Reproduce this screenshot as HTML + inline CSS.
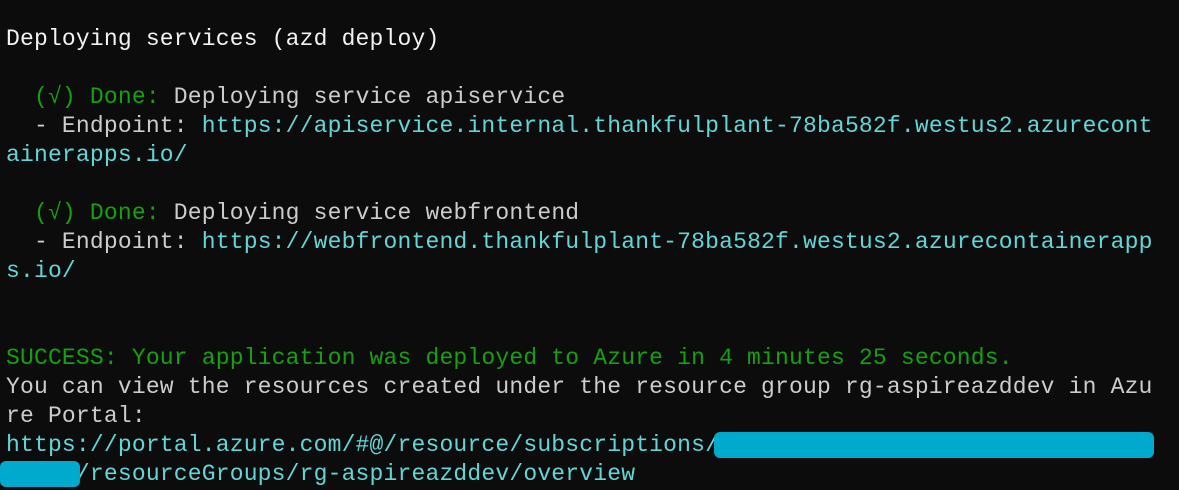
<!DOCTYPE html>
<html><head><style>
html,body{margin:0;padding:0;background:#0c0c0c;width:1179px;height:490px;overflow:hidden}
pre{margin:0;position:absolute;left:6px;top:25px;font-family:"Liberation Mono",monospace;font-size:23px;letter-spacing:0.18px;line-height:29px;color:#cccccc}
.g{color:#13a10e}.c{color:#61d6d6}.w{color:#f2f2f2}
.b{position:absolute;background:#00aacc;border-radius:6px}
</style></head><body>
<pre><span class="w">Deploying services (azd deploy)</span>

  <span class="g">(√) Done:</span> Deploying service apiservice
  - Endpoint: <span class="c">https://apiservice.internal.thankfulplant-78ba582f.westus2.azurecont</span>
<span class="c">ainerapps.io/</span>

  <span class="g">(√) Done:</span> Deploying service webfrontend
  - Endpoint: <span class="c">https://webfrontend.thankfulplant-78ba582f.westus2.azurecontainerapp</span>
<span class="c">s.io/</span>


<span class="g">SUCCESS: Your application was deployed to Azure in 4 minutes 25 seconds.</span>
You can view the resources created under the resource group rg-aspireazddev in Azu
re Portal:
<span class="c">https://portal.azure.com/#@/resource/subscriptions/</span>
<span class="c">     /resourceGroups/rg-aspireazddev/overview</span></pre>
<div class="b" style="left:714px;top:432px;width:440px;height:26px"></div>
<div class="b" style="left:0;top:461px;width:80px;height:26px"></div>
</body></html>
